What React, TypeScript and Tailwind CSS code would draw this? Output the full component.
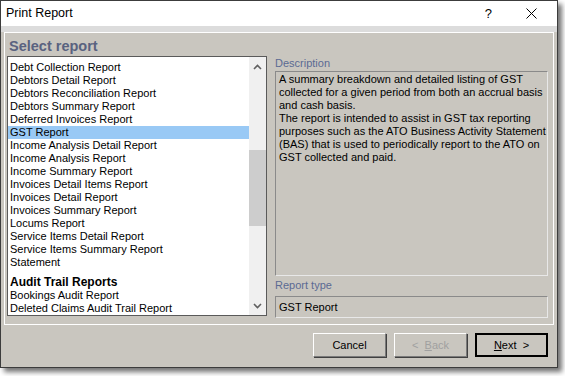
const reports = [
  "Debt Collection Report",
  "Debtors Detail Report",
  "Debtors Reconciliation Report",
  "Debtors Summary Report",
  "Deferred Invoices Report",
  "GST Report",
  "Income Analysis Detail Report",
  "Income Analysis Report",
  "Income Summary Report",
  "Invoices Detail Items Report",
  "Invoices Detail Report",
  "Invoices Summary Report",
  "Locums Report",
  "Service Items Detail Report",
  "Service Items Summary Report",
  "Statement",
];

const audit = ["Bookings Audit Report", "Deleted Claims Audit Trail Report", "Invoice Audit Report"];

const description = [
  "A summary breakdown and detailed listing of GST",
  "collected for a given period from both an accrual basis",
  "and cash basis.",
  "The report is intended to assist in GST tax reporting",
  "purposes such as the ATO Business Activity Statement",
  "(BAS) that is used to periodically report to the ATO on",
  "GST collected and paid.",
];

const Chevron = ({ up }: { up?: boolean }) => (
  <svg width="9" height="6" viewBox="0 0 9 6" className="block">
    <path d={up ? "M1 5 L4.5 1.5 L8 5" : "M1 1 L4.5 4.5 L8 1"} fill="none" stroke="#606060" strokeWidth="1.6" />
  </svg>
);

const ReportList = () => (
  <div className="flex w-[260px] h-[260px] border border-[#5a5a5a] bg-white overflow-hidden">
    <div className="flex-1 flex flex-col pt-[4px] overflow-hidden">
      {reports.map((r) => (
        <div
          key={r}
          className={`h-[13px] leading-[13px] pl-[2px] whitespace-nowrap ${r === "GST Report" ? "bg-[#99c9f5]" : ""}`}
        >
          {r}
        </div>
      ))}
      <div className="mx-[1px] mt-[5px] h-px bg-black" />
      <div className="h-[15px] leading-[16px] pl-[2px] font-bold text-[12px] whitespace-nowrap">Audit Trail Reports</div>
      {audit.map((r) => (
        <div key={r} className="h-[13px] leading-[13px] pl-[2px] whitespace-nowrap">
          {r}
        </div>
      ))}
    </div>
    {/* scrollbar */}
    <div className="w-[17px] bg-[#f0f0f0] flex flex-col items-center">
      <div className="h-[17px] flex items-center justify-center pt-[3px]">
        <Chevron up />
      </div>
      <div className="h-[76px]" />
      <div className="w-[17px] h-[76px] bg-[#cdcdcd]" />
      <div className="flex-1" />
      <div className="h-[17px] flex items-center justify-center pb-[2px]">
        <Chevron />
      </div>
    </div>
  </div>
);

export default function App() {
  return (
    <div className="w-[565px] h-[376px] bg-white relative" style={{ fontFamily: '"Liberation Sans", Arial, sans-serif' }}>
      <div className="w-[558px] h-[368px] border border-[#3c3c3c] bg-[#c9c6bf] flex flex-col shadow-[4px_4px_5px_rgba(0,0,0,0.55)] text-[11px] text-black">
        {/* title bar */}
        <div className="h-[25px] bg-white flex items-center pl-[5px] pr-[20px] shrink-0">
          <span className="text-[12.5px]">Print Report</span>
          <div className="flex-1" />
          <span className="text-[13px] mr-[34px]">?</span>
          <svg width="11" height="11" viewBox="0 0 11 11">
            <path d="M0.5 0.5 L10.5 10.5 M10.5 0.5 L0.5 10.5" stroke="#000" strokeWidth="1" />
          </svg>
        </div>
        <div className="h-[6px] bg-[#dcdcdc] shrink-0" />
        {/* main panel */}
        <div className="mx-[3px] h-[293px] border border-white bg-[#c9c6bf] flex flex-col px-[2px]">
          <div className="h-[23px] pt-[5px] pl-[2px] text-[14.5px] font-bold leading-[16px] text-[#59627f]">Select report</div>
          <div className="flex">
            <ReportList />
            <div className="ml-[8px] w-[273px] flex flex-col">
              <div className="h-[15px] pt-[1px] leading-[13px] text-[#5b6a93]">Description</div>
              <div className="h-[205px] border border-[#8a8a8a] border-r-[#e8e8e8] border-b-[#e8e8e8] px-[3px] pt-[1px] leading-[13px]">
                {description.map((l) => (
                  <div key={l} className="whitespace-nowrap">
                    {l}
                  </div>
                ))}
              </div>
              <div className="h-[20px] pt-[3px] leading-[13px] text-[#5b6a93]">Report type</div>
              <div className="h-[22px] border border-[#8a8a8a] border-r-[#e8e8e8] border-b-[#e8e8e8] px-[3px] flex items-center">
                GST Report
              </div>
            </div>
          </div>
        </div>
        {/* buttons */}
        <div className="flex justify-end gap-[8px] pr-[9px] pt-[8px]">
          <div className="w-[73px] h-[24px] border border-[#7a7a7a] border-t-white border-l-white shadow-[1px_1px_0_#404040] flex items-center justify-center">
            Cancel
          </div>
          <div className="w-[73px] h-[24px] border border-[#7a7a7a] border-t-white border-l-white shadow-[1px_1px_0_#404040] flex items-center justify-center text-[#a0a0a0]">
            &lt;&nbsp;&nbsp;<span className="underline">B</span>ack
          </div>
          <div className="w-[73px] h-[24px] border-2 border-black flex items-center justify-center">
            <span className="underline">N</span>ext&nbsp;&nbsp;&gt;
          </div>
        </div>
      </div>
    </div>
  );
}
